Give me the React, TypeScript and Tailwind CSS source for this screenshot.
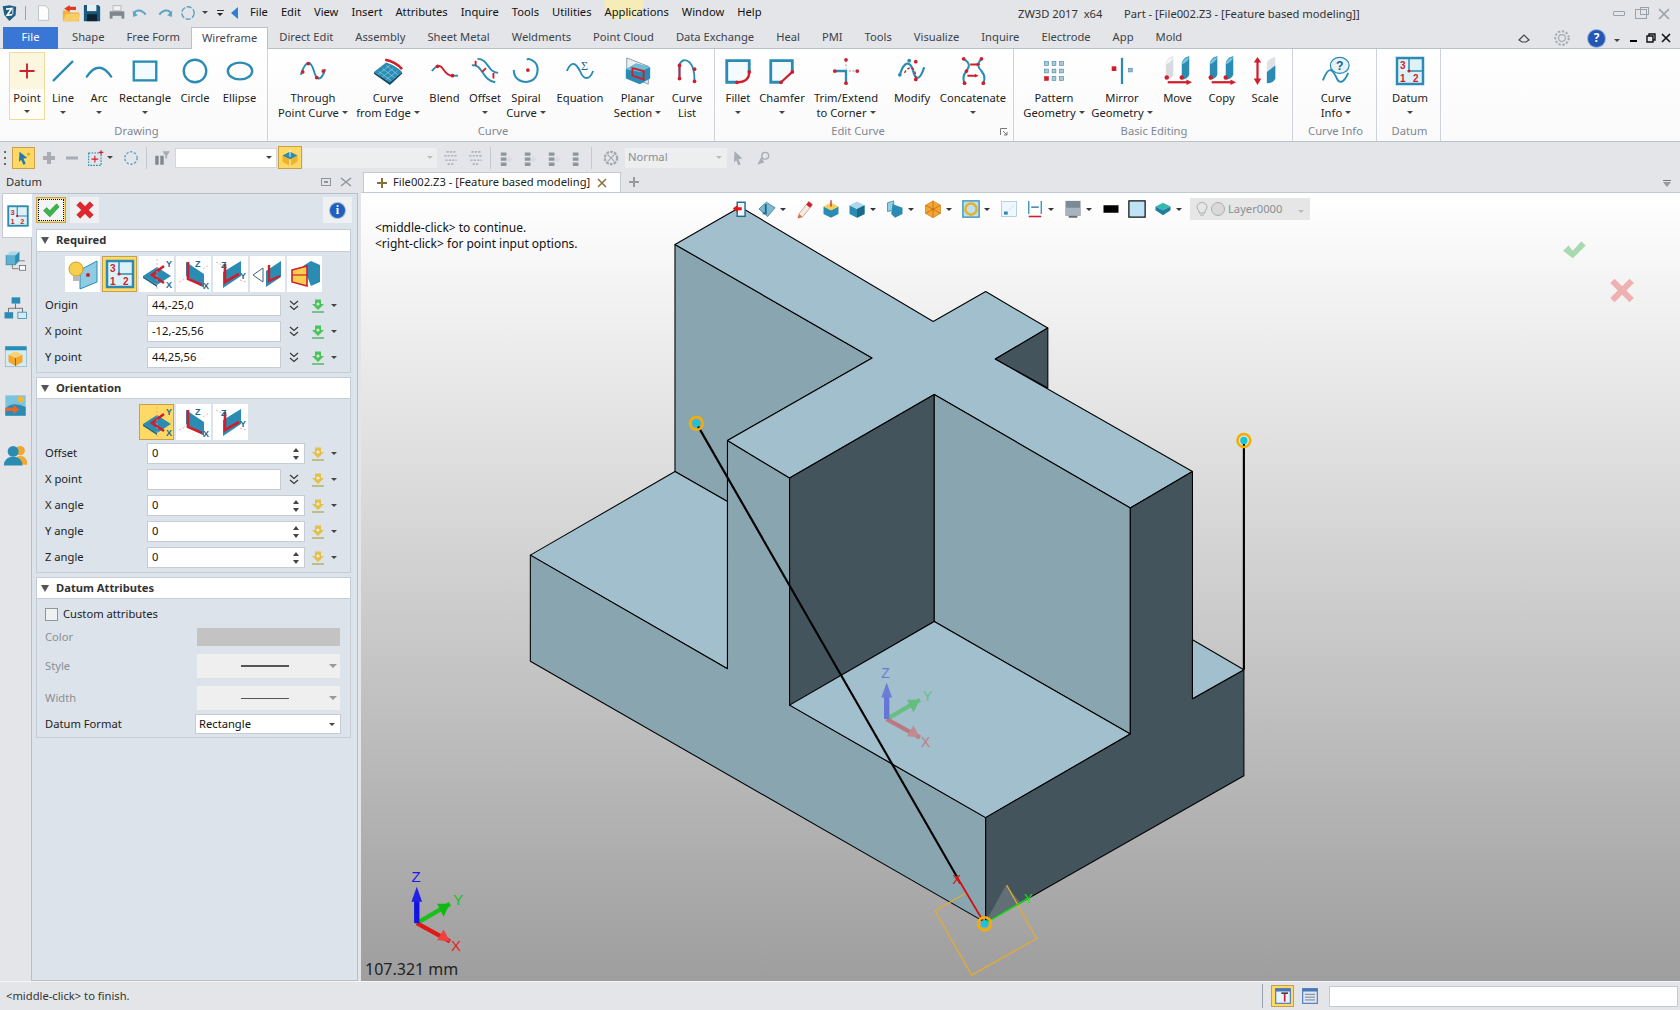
import type { ReactNode } from "react"

const T = "#2a8cb3"
const D = "#1b6a8c"
const R = "#cf1f2d"

function Svg({ s = 30, vb = "0 0 32 32", children }: { s?: number; vb?: string; children: ReactNode }) {
  return (
    <svg width={s} height={s} viewBox={vb} fill="none" className="shrink-0">
      {children}
    </svg>
  )
}

const Dot = ({ x, y, r = 2 }: { x: number; y: number; r?: number }) => <circle cx={x} cy={y} r={r} fill={R} />

function Cyl({ x, fill = T, top = "#7cc4dd" }: { x: number; fill?: string; top?: string }) {
  return (
    <g>
      <path d={`M${x} 8 Q${x + 1} 2 ${x + 8} 0 V20 Q${x + 6} 25 ${x} 25 Z`} fill={fill} />
      <path d={`M${x} 9 Q${x + 1} 3 ${x + 8} 1 Q${x + 7} 6 ${x} 9Z`} fill={top} />
    </g>
  )
}

const DatumGlyph = () => (
  <>
    <rect x="3" y="3" width="26" height="26" fill="#dff1f8" stroke={T} strokeWidth="2.5" />
    <path d="M15 4 V16 H28" stroke={T} strokeWidth="1.5" />
    <text x="6" y="14" fontSize="10" fontWeight="700" fill={R} fontFamily="Liberation Sans, sans-serif">3</text>
    <text x="6" y="27" fontSize="10" fontWeight="700" fill={R} fontFamily="Liberation Sans, sans-serif">1</text>
    <text x="19" y="27" fontSize="10" fontWeight="700" fill={R} fontFamily="Liberation Sans, sans-serif">2</text>
    <Dot x={15} y={16} r={1.6} />
  </>
)

const ribbonIcon: Record<string, ReactNode> = {
  point: <path d="M16 8 V24 M8 16 H24" stroke={R} strokeWidth="2" />,
  line: <path d="M6 26 L26 6" stroke={T} strokeWidth="2.5" strokeLinecap="round" />,
  arc: <path d="M3 22 Q16 3 29 22" stroke={T} strokeWidth="2.5" strokeLinecap="round" />,
  rect: <rect x="4" y="6" width="24" height="20" stroke={T} strokeWidth="2.5" fill="#f4fbfe" />,
  circle: <circle cx="16" cy="16" r="12" stroke={T} strokeWidth="2.5" />,
  ellipse: <ellipse cx="16" cy="16" rx="13" ry="9" stroke={T} strokeWidth="2.5" />,
  through: (
    <>
      <path d="M3 20 C9 2 14 6 17 16 C20 27 25 27 29 14" stroke={T} strokeWidth="2" />
      <Dot x={5} y={17} /><Dot x={11} y={8} /><Dot x={20} y={23} /><Dot x={27} y={16} />
    </>
  ),
  edge: (
    <>
      <path d="M1 17 L14 7 Q24 10 31 17 L18 28Z" fill={T} />
      <path d="M6 16.5 L19 26 M10 13.5 L23 23 M14 10 L27 20.5 M5 20 L18 10 M9 23 L22 13 M13 26 L26 16" stroke="#7cc4dd" strokeWidth="0.9" />
      <path d="M1 17 L18 28 L31 17 V19 L18 31 L1 19Z" fill="#0c4a66" />
      <path d="M13 4 Q24 6 31 14" stroke={R} strokeWidth="2.6" />
    </>
  ),
  blend: (
    <>
      <path d="M2 16 Q6 11 9 11" stroke={T} strokeWidth="2" />
      <path d="M9 11 C14 8 14 21 24 21" stroke={R} strokeWidth="2" />
      <path d="M24 21 H30" stroke={T} strokeWidth="2" />
      <Dot x={8} y={11} /><Dot x={24} y={21} />
    </>
  ),
  offset: (
    <>
      <path d="M2 10 C14 8 12 26 27 28" stroke={T} strokeWidth="2" />
      <path d="M8 3 C20 3 18 17 30 18" stroke={T} strokeWidth="2" />
      <path d="M6 5 V10 M25 18 V24 M13 17 L17 13" stroke={R} strokeWidth="2" />
    </>
  ),
  spiral: (
    <>
      <path d="M3 15 C3 26 13 29 20 27 C30 24 31 9 23 5 C20 3 18 3 17 4" stroke={T} strokeWidth="2.2" />
      <Dot x={18} y={15} r={2} />
    </>
  ),
  equation: (
    <>
      <path d="M2 16 C7 4 12 8 16 16 C20 26 26 26 30 16" stroke={T} strokeWidth="2" />
      <text x="17" y="15" fontSize="13" fill={D} fontFamily="Liberation Serif, serif">Σ</text>
    </>
  ),
  planar: (
    <>
      <path d="M4 2 L27 11 V30 L4 21Z" fill="#e8eef1" stroke="#8c9aa3" />
      <path d="M3 14 L14 8 L29 12 V24 L18 30 L3 24Z" fill={T} />
      <path d="M3 14 L14 8 L29 12 L18 17Z" fill="#6fbcd8" />
      <path d="M10 13 L22 16 V25 L10 21Z" stroke={R} strokeWidth="2" />
    </>
  ),
  list: (
    <>
      <path d="M8 24 V9 Q12 1 19 7 Q24 12 24 26" stroke={T} strokeWidth="2" />
      <path d="M8 24 V10" stroke={R} strokeWidth="2" />
      <Dot x={8} y={10} /><Dot x={8} y={24} /><Dot x={24} y={14} /><Dot x={24} y={27} />
    </>
  ),
  fillet: (
    <>
      <path d="M28 17 V5 H4 V28 H15" stroke={T} strokeWidth="3" fill="#f4fbfe" />
      <path d="M15 28 Q28 28 28 17" stroke={R} strokeWidth="2.4" />
      <Dot x={15} y={28} /><Dot x={28} y={17} />
    </>
  ),
  chamfer: (
    <>
      <path d="M27 17 V5 H4 V28 H15" stroke={T} strokeWidth="3" fill="#f4fbfe" />
      <path d="M15 28 L27 17" stroke={R} strokeWidth="2.4" />
      <Dot x={15} y={28} /><Dot x={27} y={17} />
    </>
  ),
  trim: (
    <>
      <path d="M4 16 H16 V28" stroke={T} strokeWidth="2.5" />
      <path d="M16 5 V14 M19 16 H28" stroke="#aab4ba" strokeDasharray="2 2" strokeWidth="1.5" />
      <Dot x={16} y={4} /><Dot x={4} y={16} /><Dot x={28} y={16} /><Dot x={16} y={29} />
    </>
  ),
  modify: (
    <>
      <path d="M3 20 C8 4 14 6 17 15 C19 25 24 28 29 12" stroke={T} strokeWidth="2.4" />
      <path d="M8 18 C12 10 20 10 20 24" stroke={R} strokeWidth="1.5" strokeDasharray="3 2" />
      <circle cx="13" cy="5" r="2" fill={T} /><Dot x={20} y={6} /><Dot x={20} y={25} /><circle cx="3" cy="20" r="2" fill={T} />
    </>
  ),
  concat: (
    <>
      <path d="M6 3 C14 8 12 12 9 16 C5 21 5 25 7 29" stroke={T} strokeWidth="2.2" />
      <path d="M25 3 C20 8 21 12 25 16 C29 21 29 25 27 29" stroke={T} strokeWidth="2.2" />
      <path d="M13 9 H21 M10 21 H19" stroke={R} strokeWidth="2" />
      <path d="M20 7 L24 9 L20 11Z M18 19 L22 21 L18 23Z" fill={R} />
      <Dot x={6} y={3} /><Dot x={25} y={3} /><Dot x={9} y={16} /><Dot x={7} y={29} /><Dot x={27} y={29} />
    </>
  ),
  pattern: (
    <>
      {[6, 14, 22].flatMap((y) =>
        [6, 14, 22].map((x) => (
          <rect key={`${x}${y}`} x={x} y={y} width="4" height="4" fill={x === 6 && y === 22 ? R : "#a9cadb"} stroke={x === 6 && y === 22 ? R : "#4f87a5"} strokeWidth="0.7" />
        ))
      )}
    </>
  ),
  mirror: (
    <>
      <path d="M16 2 V30" stroke={T} strokeWidth="2.4" />
      <rect x="5" y="11" width="5" height="5" fill={R} />
      <rect x="23" y="13" width="4" height="4" fill="#8fb9cf" stroke="#4f87a5" strokeWidth="0.6" />
    </>
  ),
  move: (
    <>
      <Cyl x={3} fill="#d9dcde" top="#f4f5f6" />
      <Cyl x={20} />
      <Dot x={4} y={23} r={2.4} /><Dot x={20} y={23} r={2.4} />
      <path d="M5 28 H26" stroke={R} strokeWidth="2.4" />
      <path d="M25 25 L31 28 L25 31Z" fill={R} />
    </>
  ),
  copy: (
    <>
      <Cyl x={3} />
      <Cyl x={20} />
      <Dot x={4} y={23} r={2.4} /><Dot x={20} y={23} r={2.4} />
      <path d="M5 28 H26" stroke={R} strokeWidth="2.4" />
      <path d="M25 25 L31 28 L25 31Z" fill={R} />
    </>
  ),
  scale: (
    <>
      <path d="M8 5 V27" stroke={R} strokeWidth="2.4" />
      <path d="M4 7 L8 1 L12 7Z M4 24 L8 31 L12 24Z" fill={R} />
      <path d="M18 8 Q19 3 27 1 V24 Q25 29 18 29Z" fill="#dfe2e4" />
      <path d="M18 17 L27 10 V24 Q25 29 18 29Z" fill={T} />
    </>
  ),
  info: (
    <>
      <ellipse cx="20" cy="10" rx="10" ry="8.5" fill="#e5f3f9" stroke={T} strokeWidth="1.3" />
      <text x="16" y="15" fontSize="13" fontWeight="700" fill="#1c5e96" fontFamily="Liberation Sans, sans-serif">?</text>
      <path d="M2 26 C8 10 12 14 16 22 C19 30 24 30 29 18" stroke={T} strokeWidth="2" />
    </>
  ),
  datum: <DatumGlyph />,
}

type Tool = { l: string[]; w: number; i: string; c?: "below" | "inline"; on?: boolean }
type Group = { label: string; w: number; pl: number; tools: Tool[]; launcher?: boolean; shift?: number }

const groups: Group[] = [
  {
    label: "Drawing",
    w: 268,
    pl: 9,
    shift: 6,
    tools: [
      { l: ["Point"], w: 36, i: "point", c: "below", on: true },
      { l: ["Line"], w: 36, i: "line", c: "below" },
      { l: ["Arc"], w: 36, i: "arc", c: "below" },
      { l: ["Rectangle"], w: 56, i: "rect", c: "below" },
      { l: ["Circle"], w: 44, i: "circle" },
      { l: ["Ellipse"], w: 45, i: "ellipse" },
    ],
  },
  {
    label: "Curve",
    w: 447,
    pl: 3,
    shift: 4,
    tools: [
      { l: ["Through", "Point Curve"], w: 84, i: "through", c: "inline" },
      { l: ["Curve", "from Edge"], w: 66, i: "edge", c: "inline" },
      { l: ["Blend"], w: 47, i: "blend" },
      { l: ["Offset"], w: 34, i: "offset", c: "below" },
      { l: ["Spiral", "Curve"], w: 48, i: "spiral", c: "inline" },
      { l: ["Equation"], w: 60, i: "equation" },
      { l: ["Planar", "Section"], w: 55, i: "planar", c: "inline" },
      { l: ["Curve", "List"], w: 44, i: "list" },
    ],
  },
  {
    label: "Edit Curve",
    w: 299,
    pl: 1,
    launcher: true,
    shift: -12,
    tools: [
      { l: ["Fillet"], w: 44, i: "fillet", c: "below" },
      { l: ["Chamfer"], w: 44, i: "chamfer", c: "below" },
      { l: ["Trim/Extend", "to Corner"], w: 84, i: "trim", c: "inline" },
      { l: ["Modify"], w: 48, i: "modify" },
      { l: ["Concatenate"], w: 74, i: "concat", c: "below" },
    ],
  },
  {
    label: "Basic Editing",
    w: 279,
    pl: 4,
    shift: 2,
    tools: [
      { l: ["Pattern", "Geometry"], w: 72, i: "pattern", c: "inline" },
      { l: ["Mirror", "Geometry"], w: 64, i: "mirror", c: "inline" },
      { l: ["Move"], w: 47, i: "move" },
      { l: ["Copy"], w: 41, i: "copy" },
      { l: ["Scale"], w: 46, i: "scale" },
    ],
  },
  { label: "Curve Info", w: 84, pl: 1, shift: 2, tools: [{ l: ["Curve", "Info"], w: 84, i: "info", c: "inline" }] },
  { label: "Datum", w: 64, pl: 1, shift: 2, tools: [{ l: ["Datum"], w: 64, i: "datum", c: "below" }] },
]

const Caret = ({ color = "border-t-[#444]" }: { color?: string }) => (
  <span className={`inline-block h-0 w-0 border-x-[3px] border-t-[3.5px] border-x-transparent ${color}`} />
)

function RibbonTool({ t }: { t: Tool }) {
  return (
    <div
      className={`flex h-[68px] shrink-0 flex-col items-center ${t.on ? "border border-[#f0dc9a] bg-[linear-gradient(#fdf6df_55%,#fffdf6_55%)]" : ""}`}
      style={{ width: t.w }}
    >
      <div className="flex h-[38px] items-center justify-center">
        <Svg s={t.i === "datum" ? 32 : 30}>{ribbonIcon[t.i]}</Svg>
      </div>
      <div className="whitespace-nowrap text-center leading-[15px] text-[#222]">{t.l[0]}</div>
      {t.l[1] ? (
        <div className="flex items-center gap-[3px] whitespace-nowrap leading-[15px] text-[#222]">
          {t.l[1]}
          {t.c === "inline" && <Caret />}
        </div>
      ) : (
        t.c === "below" && (
          <div className="flex h-[15px] items-center">
            <Caret />
          </div>
        )
      )}
    </div>
  )
}

function Ribbon() {
  return (
    <div className="flex h-[94px] shrink-0 border-y border-[#b9c1c9] bg-[linear-gradient(#ffffff,#fafafa)]">
      {groups.map((g) => (
        <div key={g.label} className="relative flex flex-col border-r border-[#cdd3d9] pt-[3px]" style={{ width: g.w }}>
          <div className="flex" style={{ paddingLeft: g.pl }}>
            {g.tools.map((t) => (
              <RibbonTool key={t.l.join()} t={t} />
            ))}
          </div>
          <div className="mt-[1px] text-center leading-[20px] text-[#7d8793]" style={{ marginLeft: g.shift ?? 0 }}>
            {g.label}
          </div>
          {g.launcher && (
            <svg width="8" height="8" viewBox="0 0 8 8" className="absolute bottom-[5px] right-[5px]" fill="none" stroke="#777">
              <path d="M.5 7V.5H7M3 3L7 7M7 4V7H4" />
            </svg>
          )}
        </div>
      ))}
    </div>
  )
}

function QuickBar() {
  return (
    <div className="flex h-[27px] shrink-0 items-center pb-[2px]">
      <span className="flex w-[20px] justify-center">
        <Svg s={18}>
          <path d="M3 4 L15 2 L27 5 L26 20 L15 30 L6 20Z" fill="#1e5f86" />
          <path d="M9 9 L19 8 L11 20 L20 19" stroke="#fff" strokeWidth="3" />
          <path d="M21 8 V18" stroke="#c8dde8" strokeWidth="2" />
        </Svg>
      </span>
      <span className="mx-[5px] h-[14px] w-px bg-[#9aa3aa]" />
      <span className="ml-[1px] flex w-[22px] justify-center">
        <Svg s={18}>
          <path d="M8 3 H20 L26 9 V29 H8Z" fill="#fdfdfd" stroke="#b6bcc1" strokeWidth="1.5" />
        </Svg>
      </span>
      <span className="ml-[6px] flex w-[22px] justify-center">
        <Svg s={20}>
          <path d="M3 12 H12 L15 15 H29 V29 H3Z" fill="#f3b13a" />
          <path d="M3 29 L8 17 H31 L27 29Z" fill="#f7cd6a" />
          <path d="M14 3 L5 9 L14 14 V11 H24 V6 H14Z" fill="#de3b1f" />
        </Svg>
      </span>
      <span className="flex w-[20px] justify-center">
        <Svg s={20}>
          <path d="M3 3 H26 L29 6 V29 H3Z" fill="#17597f" />
          <rect x="8" y="3" width="15" height="10" fill="#e9eef2" />
          <rect x="8" y="18" width="16" height="11" fill="#10222d" />
        </Svg>
      </span>
      <span className="ml-[4px] flex w-[22px] justify-center">
        <Svg s={18}>
          <path d="M9 3 H23 V12 H9Z" fill="#f3f3f3" stroke="#8d9499" />
          <path d="M3 13 H29 V26 H3Z" fill="#7f878d" />
          <path d="M8 21 H24 V29 H8Z" fill="#dfe2e4" />
        </Svg>
      </span>
      <span className="ml-[1px] flex w-[22px] justify-center">
        <Svg s={18}>
          <path d="M5 20 C6 10 18 8 26 19" stroke="#5aa4c4" strokeWidth="3.5" />
          <path d="M3 12 L4 23 L12 20Z" fill="#5aa4c4" />
        </Svg>
      </span>
      <span className="ml-[3px] flex w-[22px] justify-center">
        <Svg s={18}>
          <path d="M27 20 C26 10 14 8 6 19" stroke="#5aa4c4" strokeWidth="3.5" />
          <path d="M29 12 L28 23 L20 20Z" fill="#5aa4c4" />
        </Svg>
      </span>
      <span className="ml-[1px] flex w-[22px] justify-center">
        <Svg s={18}>
          <circle cx="16" cy="16" r="11" stroke="#5aa4c4" strokeWidth="2.5" strokeDasharray="9 3" />
        </Svg>
      </span>
      <span className="ml-[1px] flex w-[10px] justify-center">
        <Caret />
      </span>
      <span className="ml-[4px] flex w-[12px] flex-col items-center gap-[2px]">
        <span className="h-px w-[7px] bg-[#333]" />
        <Caret color="border-t-[#222]" />
      </span>
      <span className="ml-[5px] h-0 w-0 border-y-[6px] border-r-[7px] border-y-transparent border-r-[#2f7fd0]" />
      <nav className="ml-[12px] flex w-[768px] gap-[13px] text-[#111]">
        {["File", "Edit", "View", "Insert", "Attributes", "Inquire", "Tools", "Utilities", "Applications", "Window", "Help"].map((m) => (
          <span key={m}>{m}</span>
        ))}
      </nav>
      <span className="mt-[4px] w-[106px] whitespace-pre text-[#333]">ZW3D 2017  x64</span>
      <span className="mt-[4px] text-[#333]">Part - [File002.Z3 - [Feature based modeling]]</span>
      <div className="ml-auto mr-[9px] mt-[2px] flex items-center gap-[10px]">
        <span className="h-[5px] w-[12px] rounded-[1px] border border-[#9aa1a8]" />
        <span className="relative h-[10px] w-[12px] border border-[#9aa1a8]">
          <span className="absolute -right-[3px] -top-[3px] h-[8px] w-[9px] border border-[#9aa1a8]" />
        </span>
        <svg width="14" height="12" viewBox="0 0 14 12" fill="none" stroke="#9aa1a8" strokeWidth="1.6">
          <path d="M2 1 L12 11 M12 1 L2 11" />
        </svg>
      </div>
    </div>
  )
}

const tabs = ["Shape", "Free Form", "Wireframe", "Direct Edit", "Assembly", "Sheet Metal", "Weldments", "Point Cloud", "Data Exchange", "Heal", "PMI", "Tools", "Visualize", "Inquire", "Electrode", "App", "Mold"]

function TabStrip() {
  return (
    <div className="relative z-10 -mb-px flex h-[22px] shrink-0 items-end">
      <div className="ml-[3px] mr-[3px] flex h-[22px] w-[55px] items-center justify-center bg-[#3a76d6] pb-[1px] text-white">File</div>
      {tabs.map((t) => (
        <div
          key={t}
          className={`flex h-[22px] items-center px-[10px] pb-[1px] ${t === "Wireframe" ? "border-x border-t border-[#b9c1c9] bg-white text-[#445] " : "border-x border-transparent text-[#3d434a]"}`}
        >
          {t}
        </div>
      ))}
      <div className="ml-auto mr-[9px] flex h-[22px] items-center">
        <svg width="12" height="10" viewBox="0 0 12 10" fill="none" stroke="#444" strokeWidth="1.2" className="mr-[23px]">
          <path d="M1 7 L6 2 L11 7 L8 9 H4Z" />
        </svg>
        <Svg s={18}>
          <circle cx="16" cy="16" r="6" stroke="#a3a9ae" strokeWidth="2" />
          <circle cx="16" cy="16" r="12" stroke="#a3a9ae" strokeWidth="3.5" strokeDasharray="4 3" />
        </Svg>
        <span className="ml-[17px] flex h-[17px] w-[17px] items-center justify-center rounded-full bg-[#2457b5] text-[12px] font-bold text-white ring-1 ring-[#93b2d8]">?</span>
        <span className="ml-[9px]">
          <Caret />
        </span>
        <span className="ml-[10px] mt-[5px] h-[2px] w-[7px] bg-black" />
        <svg width="10" height="10" viewBox="0 0 10 10" fill="none" stroke="#111" strokeWidth="1.4" className="ml-[9px]">
          <path d="M3 3 V1 H9 V7 H7 M1 3 H7 V9 H1Z" />
        </svg>
        <svg width="10" height="10" viewBox="0 0 10 10" fill="none" stroke="#111" strokeWidth="1.6" className="ml-[5px]">
          <path d="M1 1 L9 9 M9 1 L1 9" />
        </svg>
      </div>
    </div>
  )
}

function Toolbar() {
  const gray = "#a7adb2"
  return (
    <div className="flex h-[30px] shrink-0 items-center pt-[1px]">
      <span className="ml-[4px] flex h-[14px] w-[2px] flex-col justify-between">
        <span className="h-[2px] bg-[#666]" />
        <span className="h-[2px] bg-[#666]" />
        <span className="h-[2px] bg-[#666]" />
      </span>
      <span className="ml-[6px] flex h-[22px] w-[23px] items-center justify-center border border-[#c8a04a] bg-[#ffd966]">
        <Svg s={18}>
          <path d="M8 5 L22 16 L15 17 L19 26 L15 28 L11 19 L7 23Z" fill="#2478b0" />
          <circle cx="24" cy="9" r="3" fill="#e9a91c" />
        </Svg>
      </span>
      <span className="ml-[3px] flex w-[22px] justify-center">
        <Svg s={16}>
          <path d="M16 4 V28 M4 16 H28" stroke={gray} strokeWidth="8" />
        </Svg>
      </span>
      <span className="ml-[1px] flex w-[22px] justify-center">
        <Svg s={16}>
          <path d="M4 16 H28" stroke={gray} strokeWidth="6" />
        </Svg>
      </span>
      <span className="ml-[2px] flex w-[22px] justify-center">
        <Svg s={18}>
          <rect x="3" y="7" width="22" height="22" stroke={T} strokeWidth="2" strokeDasharray="3 2" />
          <path d="M14 12 V24 M8 18 H20 M25 2 V10 M21 6 H29" stroke={R} strokeWidth="2" />
        </Svg>
      </span>
      <Caret />
      <span className="ml-[7px] flex w-[22px] justify-center">
        <Svg s={18}>
          <circle cx="16" cy="16" r="11" stroke="#5aa4c4" strokeWidth="2.5" strokeDasharray="4 3" />
        </Svg>
      </span>
      <span className="ml-[4px] h-[22px] w-px bg-[#c4cad0]" />
      <span className="ml-[5px] flex w-[20px] justify-center">
        <Svg s={18}>
          <path d="M4 12 H10 V28 H4Z M13 12 H19 V28 H13Z" fill="#80878d" />
          <path d="M17 4 H30 L25 12 V17 H22 V12Z" fill={gray} />
        </Svg>
      </span>
      <div className="ml-[3px] flex h-[20px] w-[102px] items-center justify-end border border-[#d3d7db] bg-white pr-[4px]">
        <Caret />
      </div>
      <span className="ml-[1px] flex h-[23px] w-[24px] items-center justify-center border border-[#c8a04a] bg-[#ffd966]">
        <Svg s={20}>
          <path d="M4 12 L16 6 L28 12 V22 L16 29 L4 22Z" fill="#f0b429" />
          <path d="M4 12 L16 18 L28 12 L16 6Z" fill={T} />
          <path d="M16 3 V14 M16 18 V29" stroke="#fff" strokeWidth="1.5" />
        </Svg>
      </span>
      <div className="ml-[1px] flex h-[20px] w-[134px] items-center justify-end bg-[#eceeef] pr-[4px]">
        <Caret color="border-t-[#bbb]" />
      </div>
      {[0, 1].map((k) => (
        <span key={k} className="ml-[3px] flex w-[22px] justify-center">
          <Svg s={18}>
            <path d="M4 12 H28 M8 5 H24 M6 20 H26 M10 27 H22" stroke="#aeb4b9" strokeWidth="3" strokeDasharray="4 2" />
          </Svg>
        </span>
      ))}
      <span className="ml-[3px] h-[22px] w-px bg-[#c4cad0]" />
      {[0, 1, 2, 3].map((k) => (
        <span key={k} className={`flex w-[20px] justify-center ${k === 0 ? "ml-[6px]" : "ml-[4px]"}`}>
          <Svg s={18}>
            <path d="M5 6 H15 V12 H5Z M5 15 H15 V21 H5Z M5 24 H15 V30 H5Z" fill="#8e959b" />
            {k < 3 && <path d="M18 12 L26 18 L18 24Z" fill="#d7dbde" />}
          </Svg>
        </span>
      ))}
      <span className="ml-[2px] h-[22px] w-px bg-[#c4cad0]" />
      <span className="ml-[9px] flex w-[20px] justify-center">
        <Svg s={18}>
          <circle cx="16" cy="16" r="11" stroke="#a3a9ae" strokeWidth="4" strokeDasharray="5 2" />
          <path d="M10 10 L22 22 M22 10 L10 22" stroke="#a3a9ae" strokeWidth="2" />
        </Svg>
      </span>
      <div className="ml-[4px] flex h-[20px] w-[102px] items-center justify-between bg-[#eceeef] pl-[3px] pr-[5px] text-[#8a8f94]">
        Normal
        <Caret color="border-t-[#bbb]" />
      </div>
      <span className="ml-[1px] flex w-[22px] justify-center">
        <Svg s={18}>
          <path d="M8 4 L22 17 L15 18 L19 27 L15 29 L11 20 L7 24Z" fill="#a7adb2" />
        </Svg>
      </span>
      <span className="ml-[2px] flex w-[22px] justify-center">
        <Svg s={18}>
          <circle cx="20" cy="12" r="6" stroke="#a7adb2" strokeWidth="2.5" />
          <path d="M6 28 L13 14 L18 24Z" fill="#a7adb2" />
        </Svg>
      </span>
    </div>
  )
}

const PlaneXY = () => (
  <>
    <path d="M2 18 L16 9 L30 18 L16 27Z" fill={T} />
    <path d="M2 18 L16 27 V29 L2 20Z" fill={D} />
    <path d="M23 8 L11 17 L23 25" stroke={R} strokeWidth="2.6" />
    <path d="M16 1 V31" stroke="#e59a9a" strokeDasharray="2 2" strokeWidth="0.8" />
    <text x="25" y="9" fontSize="9" fontWeight="700" fill={D} fontFamily="Liberation Sans, sans-serif">Y</text>
    <text x="25" y="30" fontSize="9" fontWeight="700" fill={D} fontFamily="Liberation Sans, sans-serif">X</text>
  </>
)
const PlaneXZ = () => (
  <>
    <path d="M8 4 L26 16 V30 L8 18Z" fill={T} />
    <path d="M10 4 V21 L24 27" stroke={R} strokeWidth="2.6" />
    <path d="M1 24 L9 20 M25 11 L31 7" stroke="#e59a9a" strokeDasharray="2 2" strokeWidth="0.8" />
    <text x="17" y="9" fontSize="9" fontWeight="700" fill={D} fontFamily="Liberation Sans, sans-serif">Z</text>
    <text x="25" y="31" fontSize="9" fontWeight="700" fill={D} fontFamily="Liberation Sans, sans-serif">X</text>
  </>
)
const PlaneYZ = () => (
  <>
    <path d="M8 14 L26 3 V18 L8 30Z" fill={T} />
    <path d="M10 6 V24 L24 16" stroke={R} strokeWidth="2.6" />
    <path d="M1 4 L9 8 M25 22 L31 24" stroke="#e59a9a" strokeDasharray="2 2" strokeWidth="0.8" />
    <text x="6" y="10" fontSize="9" fontWeight="700" fill={D} fontFamily="Liberation Sans, sans-serif">Z</text>
    <text x="25" y="21" fontSize="9" fontWeight="700" fill={D} fontFamily="Liberation Sans, sans-serif">Y</text>
  </>
)

const methodIcons: { k: string; on?: boolean; n: ReactNode }[] = [
  {
    k: "smart",
    n: (
      <>
        <path d="M13 12 L30 3 V24 L13 31Z" fill="#8fcbe3" stroke={T} />
        <Dot x={21} y={17} r={2} />
        <circle cx="9" cy="11" r="7" fill="#f7cf4e" stroke="#d29a1b" />
        <rect x="6" y="18" width="6" height="5" fill="#b5b9bc" />
      </>
    ),
  },
  { k: "datum", on: true, n: <DatumGlyph /> },
  { k: "xy", n: <PlaneXY /> },
  { k: "xz", n: <PlaneXZ /> },
  { k: "yz", n: <PlaneYZ /> },
  {
    k: "view",
    n: (
      <>
        <path d="M1 17 L11 10 V24Z" stroke="#44606f" strokeWidth="1" />
        <path d="M14 13 L29 3 V19 L14 29Z" fill={T} />
        <path d="M17 7 V23 L28 18" stroke={R} strokeWidth="2.4" />
      </>
    ),
  },
  {
    k: "face",
    n: (
      <>
        <path d="M14 8 L22 3 L31 7 V24 L22 28Z" fill={T} />
        <path d="M3 12 L18 8 V28 L3 24Z" fill="#f7cf4e" stroke={R} strokeWidth="1.6" />
        <path d="M3 17 H18" stroke={R} strokeWidth="1.2" />
      </>
    ),
  },
]

function MethodBtn({ on, children }: { on?: boolean; children: ReactNode }) {
  return (
    <span className={`flex h-[36px] w-[35px] items-center justify-center ${on ? "border border-[#c8a04a] bg-[#ffd966]" : "bg-white"}`}>
      <Svg s={32}>{children}</Svg>
    </span>
  )
}

const Chevrons = () => (
  <span className="flex w-[26px] justify-center">
    <svg width="10" height="12" viewBox="0 0 10 12" fill="none" stroke="#333" strokeWidth="1.1">
      <path d="M1 1 L5 4.5 L9 1 M1 6 L5 9.5 L9 6" />
    </svg>
  </span>
)

function PickIcon({ yellow }: { yellow?: boolean }) {
  const c = yellow ? "#e2c04a" : "#4cc35a"
  const u = yellow ? "#a8a83c" : "#3aa748"
  return (
    <>
      <span className="flex w-[22px] justify-center">
        <svg width="14" height="14" viewBox="0 0 14 14">
          <path d="M4 0.5 H10 V5 H13 L7 11 L1 5 H4Z" fill={c} />
          <path d="M1 13 H13" stroke={u} strokeWidth="1.2" />
          <circle cx="7" cy="5" r="1.6" fill="#fff" opacity="0.7" />
        </svg>
      </span>
      <span className="flex w-[10px] justify-center">
        <Caret />
      </span>
    </>
  )
}

function FieldRow({ label, value, spin, yellow }: { label: string; value: string; spin?: boolean; yellow?: boolean }) {
  return (
    <div className="flex h-[21px] items-center pl-[8px]">
      <span className="w-[102px] text-[#222]">{label}</span>
      <div className={`flex h-[21px] items-center justify-between border border-[#c6ccd3] bg-white pl-[4px] pr-[5px] text-[#111] ${spin ? "w-[158px]" : "w-[134px]"}`}>
        {value}
        {spin && (
          <span className="flex flex-col gap-[4px]">
            <span className="h-0 w-0 border-x-[3px] border-b-[4px] border-x-transparent border-b-[#444]" />
            <span className="h-0 w-0 border-x-[3px] border-t-[4px] border-x-transparent border-t-[#444]" />
          </span>
        )}
      </div>
      {spin ? <span className="w-[2px]" /> : <Chevrons />}
      <PickIcon yellow={yellow} />
    </div>
  )
}

function Section({ title, h, bh, children }: { title: string; h: number; bh: number; children: ReactNode }) {
  return (
    <div className="mb-[4px] w-[315px]">
      <div className="flex items-center gap-[7px] border border-[#c6ccd3] bg-white pl-[4px] font-bold text-[#333]" style={{ height: h }}>
        <span className="h-0 w-0 border-x-[4.5px] border-t-[7px] border-x-transparent border-t-[#555]" />
        {title}
      </div>
      <div className="flow-root border-x border-b border-[#c6ccd3]" style={{ height: bh }}>
        {children}
      </div>
    </div>
  )
}

function Panel() {
  const sideIcons: ReactNode[] = [
    <>
      <rect x="4" y="12" width="12" height="12" fill="#5fb1d0" stroke={T} />
      <path d="M4 12 L9 7 H21 L16 12Z" fill="#a8d8ea" />
      <path d="M16 24 V12 L21 7 V19Z" fill={T} />
      <path d="M12 24 V29 H20 M20 19 H28" stroke="#666" />
      <rect x="21" y="25" width="8" height="6" fill="#fff" stroke="#666" />
    </>,
    <>
      <rect x="11" y="3" width="11" height="8" fill={T} />
      <rect x="2" y="22" width="11" height="8" fill={T} />
      <rect x="19" y="22" width="11" height="8" fill="#d5ecf5" stroke={T} />
      <path d="M16 11 V17 M7 22 V17 H25 V22" stroke="#555" />
    </>,
    <>
      <rect x="3" y="3" width="27" height="26" fill="#d5ecf5" stroke="#8fb9cf" />
      <rect x="3" y="3" width="27" height="5" fill={T} />
      <path d="M16 10 L25 14 V23 L16 28 L7 23 V14Z" fill="#f0a830" />
      <path d="M7 14 L16 18 L25 14 L16 10Z" fill="#f9d274" />
      <path d="M16 18 V28" stroke={R} />
    </>,
    <>
      <rect x="3" y="3" width="26" height="26" fill="#7cc4dd" />
      <path d="M3 20 Q12 10 29 18 V29 H3Z" fill={T} />
      <circle cx="23" cy="8" r="4" fill="#f7b733" />
      <path d="M3 19 H13 V15 L21 21 L13 27 V23 H3Z" fill="#e8662c" />
    </>,
    <>
      <circle cx="22" cy="11" r="6" fill="#f0a830" />
      <path d="M12 29 Q13 18 22 18 Q31 18 31 29Z" fill="#f0a830" />
      <circle cx="13" cy="12" r="7" fill="#2a8cb3" />
      <path d="M1 30 Q2 19 13 19 Q24 19 25 30Z" fill="#2a8cb3" />
    </>,
  ]
  return (
    <div className="flex w-[358px] shrink-0 flex-col">
      <div className="flex h-[21px] items-center justify-between pb-[1px] pl-[6px] pr-[6px] text-[#333]">
        Datum
        <span className="flex items-center gap-[9px]">
          <span className="flex h-[8px] w-[10px] items-center justify-center border border-[#8d949a]">
            <span className="h-[2px] w-[4px] bg-[#8d949a]" />
          </span>
          <svg width="12" height="10" viewBox="0 0 12 10" fill="none" stroke="#8d949a" strokeWidth="1.4">
            <path d="M1 1 L11 9 M11 1 L1 9" />
          </svg>
        </span>
      </div>
      <div className="flex min-h-0 flex-1">
        <div className="flex w-[31px] shrink-0 flex-col items-center">
          <div className="relative z-10 -mr-px ml-[2px] flex h-[45px] w-[30px] items-center justify-center self-stretch border-y border-l border-[#c3cad2] bg-white">
            <Svg s={24}>
              <DatumGlyph />
            </Svg>
          </div>
          <div className="mt-[8px] flex flex-col items-center gap-[24px]">
            {sideIcons.map((n, i) => (
              <Svg key={i} s={25}>
                {n}
              </Svg>
            ))}
          </div>
        </div>
        <div className="min-w-0 flex-1 border border-[#b7bfc8] bg-[#dce3ea] pl-[4px] pt-[3px]">
          <div className="mb-[6px] flex h-[26px] w-[317px] items-center">
            <span className="flex h-[26px] w-[30px] items-center justify-center border border-[#c8a04a] bg-[#ffd966] p-[1px]">
              <span className="flex h-full w-full items-center justify-center border border-dotted border-black bg-[#f3f4f5]">
                <Svg s={20}>
                  <path d="M4 17 L9 12 L14 17 L25 6 L29 11 L14 27Z" fill="#3bb54a" stroke="#1d7f2c" strokeWidth="0.8" />
                </Svg>
              </span>
            </span>
            <span className="ml-[4px] flex h-[26px] w-[29px] items-center justify-center bg-[#eef0f2]">
              <Svg s={22}>
                <path d="M4 9 L9 4 L16 11 L23 4 L28 9 L21 16 L28 23 L23 28 L16 21 L9 28 L4 23 L11 16Z" fill="#e3262e" stroke="#a81c22" strokeWidth="0.8" />
              </Svg>
            </span>
            <span className="ml-auto mr-[1px] flex h-[26px] w-[29px] items-center justify-center bg-[#eef0f2]">
              <span className="flex h-[15px] w-[15px] items-center justify-center rounded-full bg-[#1f5fc0] font-['Liberation_Serif',serif] text-[12px] font-bold text-white ring-1 ring-[#a9b7c8]">i</span>
            </span>
          </div>
          <Section title="Required" h={23} bh={121}>
            <div className="mt-[4px] flex gap-[2px] pl-[28px]">
              {methodIcons.map((m) => (
                <MethodBtn key={m.k} on={m.on}>
                  {m.n}
                </MethodBtn>
              ))}
            </div>
            <div className="mt-[3px] flex flex-col gap-[5px]">
              <FieldRow label="Origin" value="44,-25,0" />
              <FieldRow label="X point" value="-12,-25,56" />
              <FieldRow label="Y point" value="44,25,56" />
            </div>
          </Section>
          <Section title="Orientation" h={22} bh={174}>
            <div className="mt-[5px] flex gap-[2px] pl-[102px]">
              <MethodBtn on>
                <PlaneXY />
              </MethodBtn>
              <MethodBtn>
                <PlaneXZ />
              </MethodBtn>
              <MethodBtn>
                <PlaneYZ />
              </MethodBtn>
            </div>
            <div className="mt-[3px] flex flex-col gap-[5px]">
              <FieldRow label="Offset" value="0" spin yellow />
              <FieldRow label="X point" value="" yellow />
              <FieldRow label="X angle" value="0" spin yellow />
              <FieldRow label="Y angle" value="0" spin yellow />
              <FieldRow label="Z angle" value="0" spin yellow />
            </div>
          </Section>
          <Section title="Datum Attributes" h={22} bh={139}>
            <div className="flex h-[29px] items-center pl-[8px] pt-[1px] text-[#222]">
              <span className="mr-[5px] h-[13px] w-[13px] border border-[#8f969c] bg-[#eef0f2]" />
              Custom attributes
            </div>
            <div className="flex h-[18px] items-center pl-[8px] text-[#8a8f94]">
              <span className="w-[152px]">Color</span>
              <span className="h-[18px] w-[143px] bg-[#c3c3c3]" />
            </div>
            <div className="mt-[8px] flex h-[24px] items-center pl-[8px] text-[#8a8f94]">
              <span className="w-[152px]">Style</span>
              <span className="flex h-[24px] w-[143px] items-center bg-[#efefef] pl-[44px] pr-[3px]">
                <span className="h-[2px] w-[48px] bg-[#555]" />
                <span className="ml-auto h-0 w-0 border-x-[4px] border-t-[4px] border-x-transparent border-t-[#999]" />
              </span>
            </div>
            <div className="mt-[8px] flex h-[24px] items-center pl-[8px] text-[#8a8f94]">
              <span className="w-[152px]">Width</span>
              <span className="flex h-[24px] w-[143px] items-center bg-[#efefef] pl-[44px] pr-[3px]">
                <span className="h-px w-[48px] bg-[#555]" />
                <span className="ml-auto h-0 w-0 border-x-[4px] border-t-[4px] border-x-transparent border-t-[#999]" />
              </span>
            </div>
            <div className="mt-[4px] flex h-[20px] items-center pl-[8px] text-[#222]">
              <span className="w-[150px]">Datum Format</span>
              <span className="flex h-[20px] w-[146px] items-center justify-between border border-[#c6ccd3] bg-white pl-[3px] pr-[5px] text-[#111]">
                Rectangle
                <Caret />
              </span>
            </div>
          </Section>
        </div>
      </div>
    </div>
  )
}

function Triad({ x, y, k = 1, label = 14 }: { x: number; y: number; k?: number; label?: number }) {
  const f = "Liberation Sans, sans-serif"
  return (
    <g transform={`translate(${x} ${y}) scale(${k})`}>
      <path d="M0 0 L31 -18" stroke="#18c018" strokeWidth="4" />
      <path d="M19 -18 L31 -18 L25 -6Z" fill="#12b812" />
      <path d="M0 0 L31 17" stroke="#e01818" strokeWidth="4" />
      <path d="M19 16 L31 17 L25 6Z" fill="#f04040" />
      <path d="M0 0 V-24" stroke="#1414e0" strokeWidth="5" />
      <path d="M-5 -20 L0 -34 L5 -20Z" fill="#2222e6" />
      <text x="-5" y="-38" fontSize={label} fill="#1a1ae0" fontFamily={f}>Z</text>
      <text x="34" y="-17" fontSize={label} fill="#18c018" fontFamily={f}>Y</text>
      <text x="32" y="26" fontSize={label} fill="#ee1c1c" fontFamily={f}>X</text>
    </g>
  )
}

function Model() {
  const top = "#a1bfcc"
  const mid = "#88a5b0"
  const dark = "#44545c"
  const pts = [
    [650, 395],
    [1161, 411],
    [919, 862],
  ]
  return (
    <svg viewBox="337 180 1231 735.5" className="absolute inset-0 h-full w-full" fill="none">
      <g stroke="#000" strokeWidth="1" strokeLinejoin="round">
        <polygon fill={mid} points="630,228 814,334 679,411 679,468 630,440" />
        <polygon fill={top} points="495,518 630,440 679,468 679,624" />
        <polygon fill={mid} points="679,411 737,446 737,658 920,763 920,861 495,617 495,518 679,624" />
        <polygon fill={top} points="630,228 691,193 871,300 920,272 978,306 929,335 1113,440 1055,474 872,368 737,446 679,411 814,334" />
        <polygon fill={dark} points="929,335 978,306 978,362" />
        <polygon fill={dark} points="737,446 872,368 872,580 737,658" />
        <polygon fill={mid} points="872,368 1055,474 1055,685 872,580" />
        <polygon fill={top} points="737,658 872,580 1055,685 920,763" />
        <polygon fill={dark} points="1113,440 1055,474 1055,685 920,763 920,861 1161,724 1161,625 1113,652" />
        <polygon fill={top} points="1113,597 1161,625 1113,652" />
      </g>
      <path d="M919 862 L939 826 L953 843Z" fill="#fff" opacity="0.16" />
      <path d="M900.7 834 L872.7 850 L907 910 L967.5 875.8 L939.6 826" stroke="#e6ac2c" strokeWidth="1.1" />
      <path d="M919 862 L960 838" stroke="#16e016" strokeWidth="1.4" />
      <text x="956" y="843" fontSize="12" fill="#16e016" fontFamily="Liberation Sans, sans-serif">Y</text>
      <path d="M650 395 L893 818" stroke="#000" strokeWidth="2" />
      <path d="M893 818 L919 862" stroke="#d60a0a" strokeWidth="1.6" />
      <text x="889" y="825" fontSize="12" fill="#d60a0a" fontFamily="Liberation Sans, sans-serif">X</text>
      <path d="M1161 411 V625" stroke="#000" strokeWidth="2" />
      {pts.map(([x, y]) => (
        <g key={x}>
          <circle cx={x} cy={y} r="6" stroke="#f5ad00" strokeWidth="2.4" />
          <circle cx={x} cy={y} r="3.4" fill="#16c6d6" />
        </g>
      ))}
      <g opacity="0.42">
        <Triad x={827.6} y={671} k={1} label={13} />
      </g>
      <Triad x={389} y={861.5} k={1} label={14} />
      <path d="M1459 234 L1464 229 L1468 234 L1476 225 L1480 229 L1468 241Z" fill="#a9d9ae" />
      <path d="M1503 264 L1507 260 L1514 267 L1521 260 L1525 264 L1518 271 L1525 278 L1521 282 L1514 275 L1507 282 L1503 278 L1510 271Z" fill="#eeb0b0" />
    </svg>
  )
}

function ViewIcons() {
  const items: { c?: boolean; n: ReactNode }[] = [
    { c: true, n: <><path d="M3 16 L15 5 L29 14 L17 28Z" fill="#7fb7d0" stroke={D} /><path d="M14 8 V23 H9" stroke={D} strokeWidth="3" /></> },
    { n: <><path d="M6 24 L22 4 L28 9 L12 29Z" fill="#f2ece2" stroke="#b0876b" /><path d="M18 9 L24 14 L28 9 L22 4Z" fill={R} /><path d="M6 24 L12 29 L4 31Z" fill="#e16a4a" /></> },
    { n: <><path d="M4 12 L16 18 L28 12 V24 L16 30 L4 24Z" fill={T} /><path d="M4 12 L16 6 L28 12 L16 18Z" fill="#f4cf58" /><path d="M16 2 V12" stroke={R} strokeWidth="2" /></> },
    { c: true, n: <><path d="M4 10 L16 16 L28 10 V24 L16 30 L4 24Z" fill={T} /><path d="M4 10 L16 4 L28 10 L16 16Z" fill="#a8d8ea" /><path d="M16 16 V30 L28 24 V10Z" fill={D} /></> },
    { c: true, n: <><path d="M4 6 L14 3 V18 L4 20Z" fill="#8fd0e8" stroke={D} /><path d="M12 8 L28 14 V24 L16 30 L10 24Z" fill={T} /></> },
    { c: true, n: <><path d="M16 3 L28 10 V23 L16 30 L4 23 V10Z" fill="#f0a830" stroke="#c87a12" /><path d="M4 10 L28 23 M28 10 L4 23 M16 3 V30" stroke="#c0501a" /></> },
    { c: true, n: <><rect x="3" y="3" width="26" height="26" fill="#bfe0ef" stroke={T} strokeWidth="2" /><circle cx="16" cy="16" r="9" stroke="#e4b22e" strokeWidth="4" /></> },
    { n: <><rect x="4" y="4" width="24" height="24" fill="#eef7fb" stroke="#8fb9cf" /><rect x="8" y="20" width="6" height="5" fill={T} /><path d="M16 18 L25 9" stroke="#8fb9cf" strokeDasharray="2 2" /></> },
    { c: true, n: <><path d="M6 3 V24 M26 3 V24" stroke={T} strokeWidth="2" /><path d="M10 13 H22" stroke={D} strokeWidth="2" /><path d="M6 28 H26" stroke={R} strokeWidth="2.5" /></> },
    { c: true, n: <><rect x="4" y="3" width="24" height="24" fill="#7c8a94" /><path d="M4 14 H28 V27 H4Z" fill="#a5b4bd" /><path d="M9 27 H23 V30 H9Z" fill="#6a6f73" /></> },
    { n: <rect x="4" y="10" width="24" height="12" fill="#000" /> },
    { n: <rect x="3" y="3" width="26" height="26" fill="#bfe3f4" stroke="#111" strokeWidth="2" /> },
    { c: true, n: <><path d="M4 12 L16 6 L28 12 L16 18Z" fill="#39b6b2" /><path d="M4 12 L16 18 L28 12 V18 L16 26 L4 18Z" fill="#1e7f9c" /></> },
  ]
  return (
    <div className="absolute left-[370px] top-[5px] flex h-[22px] items-center">
      <span className="mr-[7px] flex w-[18px] justify-center">
        <Svg s={18}>
          <rect x="11" y="4" width="14" height="25" fill="#f2f6f8" stroke={D} strokeWidth="2.5" />
          <path d="M3 15 L12 9 V13 H19 V18 H12 V22Z" fill="#e8141c" />
        </Svg>
      </span>
      {items.map((it, i) => (
        <span key={i} className={`flex items-center ${it.c ? "mr-[8px]" : "mr-[4px]"}`}>
          <span className="flex w-[22px] justify-center">
            <Svg s={20}>{it.n}</Svg>
          </span>
          {it.c && (
            <span className="ml-[1px] flex w-[7px] justify-center">
              <Caret color="border-t-[#333]" />
            </span>
          )}
        </span>
      ))}
      <div className="flex h-[22px] w-[120px] items-center gap-[3px] bg-[#e6e6e6] pl-[6px] pr-[6px] text-[#8a8f94]">
        <svg width="12" height="15" viewBox="0 0 12 15" fill="none" stroke="#a9aeb2">
          <path d="M3 9 Q1 7 1 5 A5 4.5 0 0 1 11 5 Q11 7 9 9 V11 H3Z M4 13 H8" />
        </svg>
        <span className="h-[14px] w-[14px] rounded-full border border-[#a9aeb2] bg-[#d9d9d9]" />
        Layer0000
        <span className="ml-auto">
          <Caret color="border-t-[#bbb]" />
        </span>
      </div>
    </div>
  )
}

function Viewport() {
  return (
    <div className="flex min-w-0 flex-1 flex-col">
      <div className="flex h-[20px] shrink-0 items-end">
        <div className="ml-[2px] flex h-[20px] w-[258px] items-center border-x border-t border-[#c3cad2] bg-white pl-[13px] text-[#222]">
          <span className="relative mr-[6px] h-[10px] w-[10px]">
            <span className="absolute left-[4px] top-0 h-[10px] w-[2px] bg-[#8a6d3b]" />
            <span className="absolute left-0 top-[4px] h-[2px] w-[10px] bg-[#8a6d3b]" />
          </span>
          File002.Z3 - [Feature based modeling]
          <svg width="10" height="10" viewBox="0 0 10 10" fill="none" stroke="#8a6d3b" strokeWidth="1.5" className="ml-auto mr-[13px]">
            <path d="M1 1 L9 9 M9 1 L1 9" />
          </svg>
        </div>
        <span className="relative ml-[8px] mb-[5px] h-[10px] w-[10px]">
          <span className="absolute left-[4px] top-0 h-[10px] w-[2px] bg-[#999]" />
          <span className="absolute left-0 top-[4px] h-[2px] w-[10px] bg-[#999]" />
        </span>
        <span className="ml-auto mb-[5px] mr-[9px] flex flex-col items-center gap-[1px]">
          <span className="h-px w-[8px] bg-[#777]" />
          <span className="h-0 w-0 border-x-[4px] border-t-[5px] border-x-transparent border-t-[#999]" />
        </span>
      </div>
      <div className="border-t border-[#c3cad2]" />
      <div className="relative flex-1 overflow-hidden bg-[linear-gradient(#ffffff,#9e9e9e)]">
        <Model />
        <ViewIcons />
        <div className="absolute left-[14px] top-[27px] text-[12px] leading-[16px] text-[#111]">
          <p>&lt;middle-click&gt; to continue.</p>
          <p>&lt;right-click&gt; for point input options.</p>
        </div>
        <div className="absolute bottom-[1px] left-[4px] text-[16px] leading-[22px] text-[#222]">107.321 mm</div>
      </div>
    </div>
  )
}

function StatusBar() {
  return (
    <div className="flex h-[29px] shrink-0 items-center border-t border-[#f4f5f6]">
      <span className="ml-[6px] text-[#333]">&lt;middle-click&gt; to finish.</span>
      <span className="ml-auto h-[24px] w-px bg-[#9aa3aa]" />
      <span className="ml-[8px] flex h-[22px] w-[23px] items-center justify-center border border-[#c8a04a] bg-[#ffd966]">
        <Svg s={18}>
          <rect x="3" y="3" width="26" height="26" fill="#eaf2fa" stroke="#4a77b8" strokeWidth="2" />
          <rect x="3" y="3" width="26" height="5" fill="#4a77b8" />
          <path d="M19 12 V26" stroke={R} strokeWidth="3" />
          <path d="M13 11 H25" stroke="#444" strokeWidth="3" />
        </Svg>
      </span>
      <span className="ml-[8px] flex w-[16px] justify-center">
        <Svg s={18}>
          <rect x="3" y="3" width="26" height="26" fill="#dfe9f5" stroke="#4a77b8" strokeWidth="2" />
          <rect x="3" y="3" width="26" height="5" fill="#4a77b8" />
          <path d="M7 13 H25 M7 18 H25 M7 23 H25" stroke="#6a7480" strokeWidth="1.6" />
        </Svg>
      </span>
      <div className="ml-[11px] mr-[2px] h-[21px] w-[349px] border border-[#c3cad2] bg-white" />
    </div>
  )
}

export default function App() {
  return (
    <div className="relative flex h-[1010px] w-[1680px] flex-col overflow-hidden bg-[#e3e5e8] font-['Noto_Sans',sans-serif] text-[11.2px]">
      <div className="absolute -top-[20px] left-[604px] h-[40px] w-[40px] rounded-full bg-[#f5ecb8]" />
      <div className="relative">
        <QuickBar />
        <TabStrip />
      </div>
      <Ribbon />
      <Toolbar />
      <div className="flex min-h-0 flex-1">
        <Panel />
        <div className="w-[3px] shrink-0" />
        <Viewport />
      </div>
      <StatusBar />
    </div>
  )
}
